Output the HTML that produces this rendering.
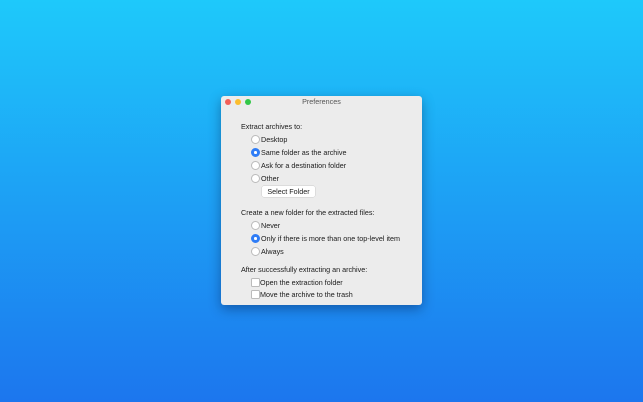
<!DOCTYPE html>
<html><head><style>
html,body{margin:0;padding:0;}
body{width:643px;height:402px;overflow:hidden;background:linear-gradient(#1ec9fb,#1c76ee);font-family:"Liberation Sans",sans-serif;position:relative;}
.win{position:absolute;left:221px;top:96px;width:201px;height:209px;background:#ececec;box-shadow:0 4px 12px rgba(0,0,40,.35);border-radius:3px;}
.t{position:absolute;font-size:7.2px;color:#1a1a1a;line-height:8px;white-space:nowrap;margin-top:1.2px;}
.dot{position:absolute;top:3px;width:6px;height:6px;border-radius:50%;}
.r{position:absolute;width:7px;height:7px;border-radius:50%;background:#fff;border:.5px solid #bbb;}
.r.on{background:#2f7df6;border-color:#2f7df6;}
.r.on::after{content:"";position:absolute;left:2.2px;top:2.2px;width:2.6px;height:2.6px;border-radius:50%;background:#fff;}
.c{position:absolute;width:7px;height:7px;border-radius:1.5px;background:#fff;border:.5px solid #bbb;}
.btn{position:absolute;left:41px;top:90px;width:53px;height:11px;background:#fff;border-radius:2px;box-shadow:0 0 0 .5px #ccc;font-size:7.2px;line-height:11px;text-align:center;color:#1a1a1a;}
</style></head><body>
<div class="win">
<div class="dot" style="left:4px;background:#f25f58"></div>
<div class="dot" style="left:14px;background:#fbbd2e"></div>
<div class="dot" style="left:24px;background:#33c748"></div>
<div class="t" style="left:0;width:201px;text-align:center;top:1px;color:#555">Preferences</div>
<div class="t" style="left:20px;top:26px">Extract archives to:</div>
<div class="r" style="left:30px;top:39px"></div><div class="t" style="left:40px;top:39px">Desktop</div>
<div class="r on" style="left:30px;top:52px"></div><div class="t" style="left:40px;top:52px">Same folder as the archive</div>
<div class="r" style="left:30px;top:65px"></div><div class="t" style="left:40px;top:65px">Ask for a destination folder</div>
<div class="r" style="left:30px;top:78px"></div><div class="t" style="left:40px;top:78px">Other</div>
<div class="btn">Select Folder</div>
<div class="t" style="left:20px;top:112px">Create a new folder for the extracted files:</div>
<div class="r" style="left:30px;top:125px"></div><div class="t" style="left:40px;top:125px">Never</div>
<div class="r on" style="left:30px;top:138px"></div><div class="t" style="left:40px;top:138px">Only if there is more than one top-level item</div>
<div class="r" style="left:30px;top:151px"></div><div class="t" style="left:40px;top:151px">Always</div>
<div class="t" style="left:20px;top:169px">After successfully extracting an archive:</div>
<div class="c" style="left:30px;top:182px"></div><div class="t" style="left:39px;top:182px">Open the extraction folder</div>
<div class="c" style="left:30px;top:194px"></div><div class="t" style="left:39px;top:194px">Move the archive to the trash</div>
</div>
</body></html>
